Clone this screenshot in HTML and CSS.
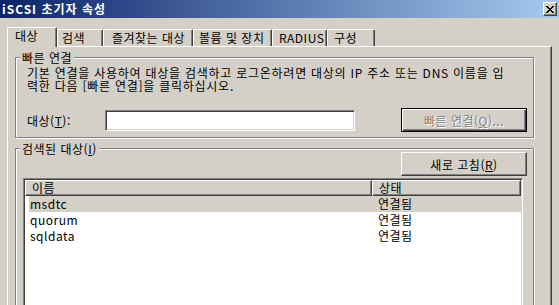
FILE: index.html
```html
<!DOCTYPE html>
<html lang="ko">
<head>
<meta charset="utf-8">
<title>iSCSI 초기자 속성</title>
<link rel="stylesheet" href="styles.css">
</head>
<body>
<div class="titlebar">
  <span class="title">iSCSI 초기자 속성</span>
  <button class="close" aria-label="닫기"><svg width="8" height="7" viewBox="0 0 8 7" shape-rendering="crispEdges"><path d="M0 0h2v1H0zM6 0h2v1H6zM1 1h2v1H1zM5 1h2v1H5zM2 2h4v1H2zM3 3h2v1H3zM2 4h4v1H2zM1 5h2v1H1zM5 5h2v1H5zM0 6h2v1H0zM6 6h2v1H6z" fill="#000"/></svg></button>
</div>
<div class="tabs">
  <div class="tab tab-active tab-1">대상</div>
  <div class="tab tab-2">검색</div>
  <div class="tab tab-3">즐겨찾는 대상</div>
  <div class="tab tab-4">볼륨 및 장치</div>
  <div class="tab tab-5">RADIUS</div>
  <div class="tab tab-6">구성</div>
</div>
<div class="page">
  <div class="group group-quick">
    <div class="legend">빠른 연결</div>
    <p class="desc">기본 연결을 사용하여 대상을 검색하고 로그온하려면 대상의 IP 주소 또는 DNS 이름을 입<br>력한 다음 [빠른 연결]을 클릭하십시오.</p>
    <div class="target-row">
      <label class="target-label" for="target">대상(<u>T</u>):</label>
      <input class="target-input" id="target" type="text">
      <button class="btn btn-default" disabled>빠른 연결(<u>Q</u>)...</button>
    </div>
  </div>
  <div class="group group-found">
    <div class="legend">검색된 대상(<u>I</u>)</div>
    <div class="refresh-row"><button class="btn">새로 고침(<u>R</u>)</button></div>
    <div class="list">
      <div class="list-head">
        <div class="hcell hcell-name">이름</div>
        <div class="hcell hcell-state">상태</div>
      </div>
      <div class="row row-selected"><span class="cell cell-name">msdtc</span><span class="cell cell-state">연결됨</span></div>
      <div class="row"><span class="cell cell-name">quorum</span><span class="cell cell-state">연결됨</span></div>
      <div class="row"><span class="cell cell-name">sqldata</span><span class="cell cell-state">연결됨</span></div>
    </div>
  </div>
</div>
</body>
</html>
```
FILE: styles.css
```css
* { box-sizing: border-box; }
html, body { margin: 0; padding: 0; }
body {
  width: 559px;
  height: 305px;
  overflow: hidden;
  background: #d4d0c8;
  font-family: "Noto Sans CJK KR", "Noto Sans", sans-serif;
  font-size: 12px;
  letter-spacing: 0.5px;
  color: #000;
}
.titlebar {
  height: 18px;
  display: flex;
  align-items: center;
  justify-content: space-between;
  padding: 0 2px;
  background: linear-gradient(to right, #0a246a, #a6caf0);
}
.title {
  color: #fff;
  font-weight: bold;
  letter-spacing: 1px;
  line-height: 18px;
}
.close {
  width: 14px;
  height: 14px;
  padding: 0;
  margin: 0;
  border: 1px solid;
  border-color: #fff #404040 #404040 #fff;
  box-shadow: inset -1px -1px #808080;
  background: #d4d0c8;
  display: flex;
  align-items: center;
  justify-content: center;
}
.close svg { display: block; }
.tabs {
  margin-top: 9px;
  height: 19px;
  display: flex;
  align-items: flex-end;
  padding-left: 7px;
}
.tab {
  height: 17px;
  border-top: 1px solid #fff;
  border-left: 1px solid #fff;
  border-right: 1px solid #404040;
  box-shadow: inset -1px 0 #808080;
  border-radius: 2px 2px 0 0;
  line-height: 16px;
  white-space: nowrap;
  background: #d4d0c8;
}
.tab-active {
  height: 20px;
  margin-bottom: -1px;
  position: relative;
  z-index: 1;
  line-height: 16px;
}
.tab-1 { width: 50px; padding-left: 7px; }
.tab-2 { width: 46px; padding-left: 4px; }
.tab-3 { width: 90px; padding-left: 8px; }
.tab-4 { width: 79px; padding-left: 5px; }
.tab-5 { width: 55px; padding-left: 6px; }
.tab-6 { width: 48px; padding-left: 6px; }
.page {
  margin-left: 7px;
  width: 545px;
  height: 259px;
  border-top: 1px solid #fff;
  border-left: 1px solid #fff;
  border-right: 1px solid #404040;
  box-shadow: inset -1px 0 #808080;
  padding: 10px 0 0 7px;
}
.group {
  width: 519px;
  border: 1px solid #808080;
  box-shadow: inset 1px 1px #fff, 1px 1px #fff;
}
.group-quick { height: 81px; }
.group-found {
  margin-top: 10px;
  height: 157px;
  border-bottom: 0;
  box-shadow: inset 1px 1px #fff, 1px 0 #fff;
}
.legend {
  width: fit-content;
  margin: -7px 0 -6px 4px;
  padding: 0 2px;
  line-height: 13px;
  background: #d4d0c8;
}
.desc {
  margin: 8px 0 0 11px;
  line-height: 13px;
  letter-spacing: 0.75px;
  white-space: nowrap;
}
.target-row {
  display: flex;
  align-items: center;
  height: 24px;
  margin: 16px 0 0 11px;
}
.target-label { width: 78px; }
.target-input {
  width: 250px;
  height: 21px;
  margin: 0;
  padding: 0 3px;
  border: 1px solid;
  border-color: #808080 #fff #fff #808080;
  box-shadow: inset 1px 1px #404040, inset -1px -1px #d4d0c8;
  background: #fff;
  font: inherit;
  outline: none;
}
.btn {
  width: 126px;
  height: 24px;
  margin: 0;
  padding: 0;
  font: inherit;
  letter-spacing: inherit;
  color: #000;
  background: #d4d0c8;
  border: 1px solid;
  border-color: #fff #404040 #404040 #fff;
  box-shadow: inset -1px -1px #808080;
}
.btn-default {
  margin-left: 46px;
  border-color: #000;
  box-shadow: inset 1px 1px #fff, inset -1px -1px #404040, inset -2px -2px #808080;
}
.btn:disabled {
  color: #808080;
  text-shadow: 1px 1px #fff;
}
.refresh-row { margin: 3px 0 0 385px; }
.refresh-row .btn { display: block; }
.list {
  margin: 2px 0 0 7px;
  width: 500px;
  height: 127px;
  padding: 1px 1px 0 1px;
  border: 1px solid;
  border-bottom: 0;
  border-color: #808080 #fff #fff #808080;
  box-shadow: inset 1px 1px #404040, inset -1px 0 #d4d0c8;
  background: #fff;
}
.list-head { display: flex; height: 16px; }
.hcell {
  height: 16px;
  border: 1px solid;
  border-color: #fff #404040 #404040 #fff;
  box-shadow: inset -1px -1px #808080;
  background: #d4d0c8;
  padding-left: 6px;
  line-height: 13px;
}
.hcell-name { width: 347px; }
.hcell-state { width: 149px; }
.row {
  display: flex;
  height: 16px;
  line-height: 16px;
  margin-left: 4px;
}
.row-selected { background: #d4d0c8; }
.cell-name { width: 343px; padding-left: 1px; }
.cell-state { padding-left: 6px; }
```
